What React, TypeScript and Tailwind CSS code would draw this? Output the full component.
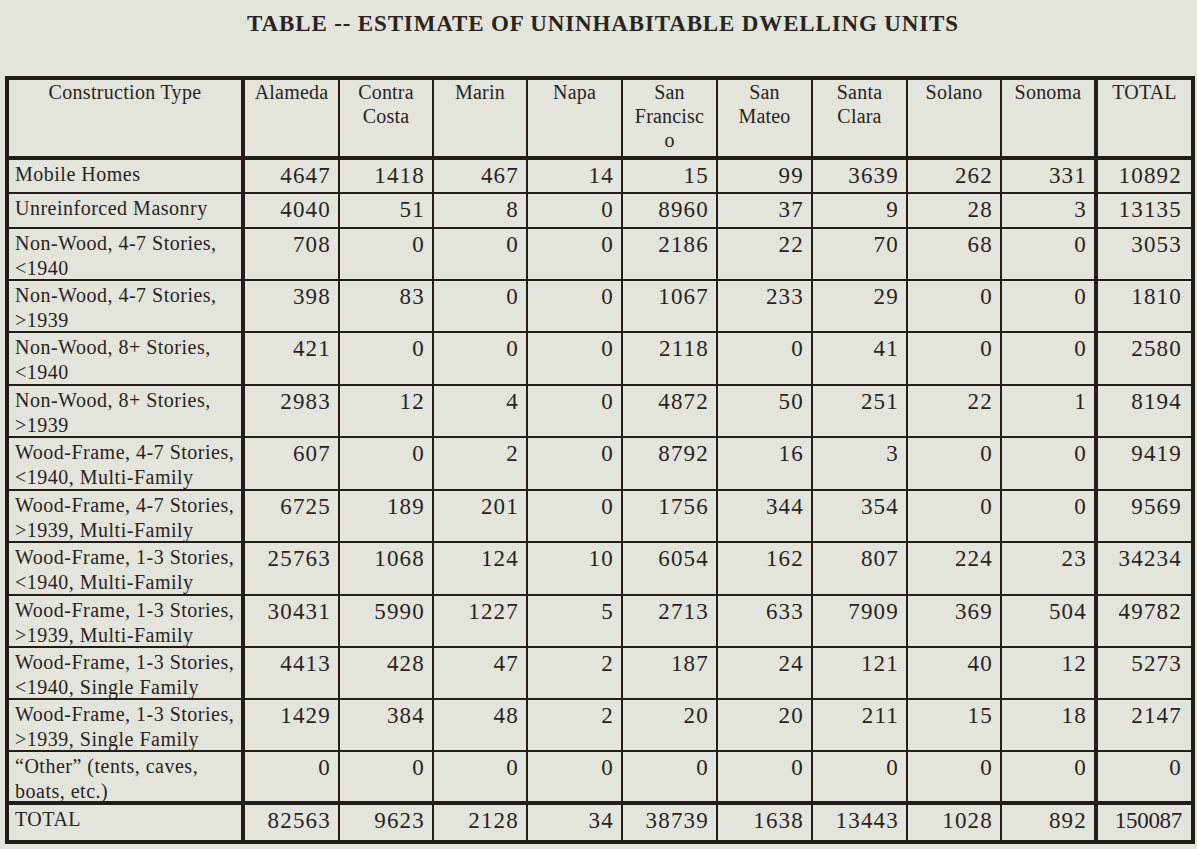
import React from 'react';

type Row = { label: string[]; values: number[] };

const counties = [
  ['Alameda'],
  ['Contra', 'Costa'],
  ['Marin'],
  ['Napa'],
  ['San', 'Francisc', 'o'],
  ['San', 'Mateo'],
  ['Santa', 'Clara'],
  ['Solano'],
  ['Sonoma'],
  ['TOTAL'],
];

const rows: Row[] = [
  { label: ['Mobile Homes'], values: [4647, 1418, 467, 14, 15, 99, 3639, 262, 331, 10892] },
  { label: ['Unreinforced Masonry'], values: [4040, 51, 8, 0, 8960, 37, 9, 28, 3, 13135] },
  { label: ['Non-Wood, 4-7 Stories,', '<1940'], values: [708, 0, 0, 0, 2186, 22, 70, 68, 0, 3053] },
  { label: ['Non-Wood, 4-7 Stories,', '>1939'], values: [398, 83, 0, 0, 1067, 233, 29, 0, 0, 1810] },
  { label: ['Non-Wood, 8+ Stories,', '<1940'], values: [421, 0, 0, 0, 2118, 0, 41, 0, 0, 2580] },
  { label: ['Non-Wood, 8+ Stories,', '>1939'], values: [2983, 12, 4, 0, 4872, 50, 251, 22, 1, 8194] },
  { label: ['Wood-Frame, 4-7 Stories,', '<1940, Multi-Family'], values: [607, 0, 2, 0, 8792, 16, 3, 0, 0, 9419] },
  { label: ['Wood-Frame, 4-7 Stories,', '>1939, Multi-Family'], values: [6725, 189, 201, 0, 1756, 344, 354, 0, 0, 9569] },
  { label: ['Wood-Frame, 1-3 Stories,', '<1940, Multi-Family'], values: [25763, 1068, 124, 10, 6054, 162, 807, 224, 23, 34234] },
  { label: ['Wood-Frame, 1-3 Stories,', '>1939, Multi-Family'], values: [30431, 5990, 1227, 5, 2713, 633, 7909, 369, 504, 49782] },
  { label: ['Wood-Frame, 1-3 Stories,', '<1940, Single Family'], values: [4413, 428, 47, 2, 187, 24, 121, 40, 12, 5273] },
  { label: ['Wood-Frame, 1-3 Stories,', '>1939, Single Family'], values: [1429, 384, 48, 2, 20, 20, 211, 15, 18, 2147] },
  { label: ['\u201cOther\u201d (tents, caves,', 'boats, etc.)'], values: [0, 0, 0, 0, 0, 0, 0, 0, 0, 0] },
  { label: ['TOTAL'], values: [82563, 9623, 2128, 34, 38739, 1638, 13443, 1028, 892, 150087] },
];

// column 0 and column 9 carry the heavy rule on their right side
const colBorder = (ci: number) =>
  ci === 0 || ci === 9 ? 'border-r-4' : ci === 10 ? '' : 'border-r-2';

// row above TOTAL gets the heavy rule underneath
const rowBorder = (ri: number) =>
  ri === 12 ? 'border-b-4' : ri === 13 ? '' : 'border-b-2';

export default function App() {
  return (
    <div className="min-h-[849px] w-[1197px] bg-[#e3e4dc] font-['Liberation_Serif',serif] text-[#28231f]">
      <h1 className="pl-[9px] pt-[10px] text-center text-[23px] font-bold leading-[28px] tracking-[0.85px] text-[#2a2420]">
        TABLE -- ESTIMATE OF UNINHABITABLE DWELLING UNITS
      </h1>

      <div className="ml-[5px] mt-[38px] grid w-[1190px] grid-cols-[236px_95px_94px_94px_95px_95px_95px_95px_94px_96px_93px] grid-rows-[80px_34px_35px_52px_52px_53px_52px_53px_52px_53px_52px_52px_52px_53px_35px] border-4 border-[#221d1a]">
        {/* header */}
        <div className="border-b-4 border-r-4 border-[#221d1a] text-center text-[20px] leading-[24px] tracking-[0.3px]">
          Construction Type
        </div>
        {counties.map((name, i) => (
          <div
            key={i}
            className={`${colBorder(i + 1)} border-b-4 border-[#221d1a] text-center text-[20px] leading-[24px] tracking-[0.2px]`}
          >
            {name.map((l, j) => (
              <div key={j}>{l}</div>
            ))}
          </div>
        ))}

        {/* body */}
        {rows.map((row, ri) => (
          <React.Fragment key={ri}>
            <div
              className={`${rowBorder(ri)} border-r-4 border-[#221d1a] pl-[6px] pt-[2px] text-[20px] leading-[25px] tracking-[0.5px]`}
            >
              {row.label.map((l, j) => (
                <div key={j} className="whitespace-nowrap">{l}</div>
              ))}
            </div>
            {row.values.map((v, ci) => (
              <div
                key={ci}
                className={`${rowBorder(ri)} ${colBorder(ci + 1)} border-[#221d1a] pt-[3px] text-right text-[23px] leading-[26px] ${
                  ci === 9 ? 'pr-[9px]' : 'pr-[7px]'
                } ${v >= 100000 ? 'tracking-[-0.3px]' : 'tracking-[1.2px]'}`}
              >
                {v}
              </div>
            ))}
          </React.Fragment>
        ))}
      </div>
    </div>
  );
}
